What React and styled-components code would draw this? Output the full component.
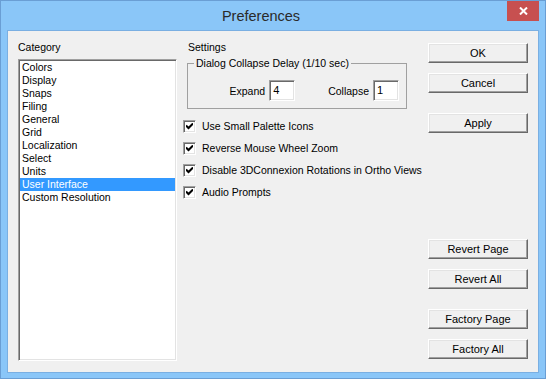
import React from "react";
import styled, { createGlobalStyle } from "styled-components";

const Global = createGlobalStyle`
  html, body { margin: 0; padding: 0; background: #8ac6f8; }
  body { font-family: "Liberation Sans", Arial, sans-serif; }
  * { box-sizing: border-box; }
`;

const Window = styled.div`
  width: 546px;
  height: 379px;
  background: #8ac6f8;
  border: 1px solid #6a9ed4;
  padding: 0 6px 5px 6px;
  display: flex;
  flex-direction: column;
`;

const TitleBar = styled.div`
  height: 29px;
  display: grid;
  grid-template-columns: 1fr auto 1fr;
  align-items: start;
`;

const Title = styled.div`
  grid-column: 2;
  margin-right: 24px;
  font-family: "Liberation Sans", Arial, sans-serif;
  font-size: 14.5px;
  color: #2a2a2a;
  padding-top: 6px;
  line-height: 18px;
`;

const Close = styled.div`
  grid-column: 3;
  justify-self: end;
  width: 32px;
  height: 20px;
  background: #c75050;
  display: flex;
  align-items: center;
  justify-content: center;
`;

const Client = styled.div`
  flex: 1;
  background: #f0f0f0;
  border: 1px solid #7aafe2;
  display: flex;
  padding: 10px 10px 11px 10px;
  font-family: "Liberation Sans", Arial, sans-serif;
  font-size: 10.5px;
  color: #000;
`;

const LeftCol = styled.div`
  width: 159px;
  display: flex;
  flex-direction: column;
`;

const Label = styled.div`
  line-height: 13px;
  height: 13px;
  margin-bottom: ${(p) => p.$mb || 0}px;
  margin-left: ${(p) => p.$ml || 0}px;
`;

const ListBox = styled.div`
  flex: 1;
  background: #fff;
  border: 1px solid;
  border-color: #a0a0a0 #fff #fff #a0a0a0;
  box-shadow: inset 1px 1px 0 #696969, inset -1px -1px 0 #e3e3e3;
  padding: 1px;
  display: flex;
  flex-direction: column;
`;

const Item = styled.div`
  height: 13px;
  line-height: 13px;
  padding-left: 2px;
  background: ${(p) => (p.$sel ? "#3399ff" : "transparent")};
  color: ${(p) => (p.$sel ? "#fff" : "#000")};
  white-space: nowrap;
`;

const MidCol = styled.div`
  flex: 1;
  margin-left: 6px;
  display: flex;
  flex-direction: column;
`;

const Group = styled.fieldset`
  margin: 3px 0 0 4px;
  width: 220px;
  height: 52px;
  border: 1px solid #a0a0a0;
  padding: 0 7px 0 0;
  display: flex;
  justify-content: flex-end;
  align-items: flex-start;
  legend {
    margin-left: 6px;
    padding: 0 2px;
    line-height: 13px;
    font-size: 10.5px;
  }
`;

const FieldRow = styled.div`
  display: flex;
  align-items: center;
  margin-top: 10px;
`;

const FieldLabel = styled.span`
  margin-right: 4px;
  margin-left: ${(p) => p.$ml || 0}px;
`;

const TextInput = styled.div`
  width: 26px;
  height: 21px;
  background: #fff;
  border: 1px solid;
  border-color: #a0a0a0 #fff #fff #a0a0a0;
  box-shadow: inset 1px 1px 0 #696969, inset -1px -1px 0 #e3e3e3;
  padding: 3px 0 0 3px;
  line-height: 13px;
  font-size: 11px;
`;

const Checks = styled.div`
  margin-top: 11px;
  display: flex;
  flex-direction: column;
  gap: 9px;
`;

const CheckRow = styled.div`
  display: flex;
  align-items: center;
  height: 13px;
  line-height: 13px;
  white-space: nowrap;
`;

const Box = styled.div`
  width: 13px;
  height: 13px;
  background: #fff;
  border: 1px solid;
  border-color: #a0a0a0 #fff #fff #a0a0a0;
  box-shadow: inset 1px 1px 0 #696969, inset -1px -1px 0 #e3e3e3;
  margin-right: 6px;
  display: flex;
  align-items: center;
  justify-content: center;
  flex-shrink: 0;
`;

const RightCol = styled.div`
  width: 100px;
  margin: 2px 0 2px 0;
  display: flex;
  flex-direction: column;
  justify-content: space-between;
`;

const BtnGroup = styled.div`
  display: flex;
  flex-direction: column;
`;

const Button = styled.div`
  width: 100px;
  height: 20px;
  margin-top: ${(p) => p.$mt || 0}px;
  background: #f0f0f0;
  border: 1px solid;
  border-color: #fff #696969 #696969 #fff;
  box-shadow: inset -1px -1px 0 #a0a0a0, inset 1px 1px 0 #e3e3e3;
  display: flex;
  align-items: center;
  justify-content: center;
  line-height: 13px;
  font-size: 11px;
`;

const categories = [
  "Colors",
  "Display",
  "Snaps",
  "Filing",
  "General",
  "Grid",
  "Localization",
  "Select",
  "Units",
  "User Interface",
  "Custom Resolution",
];

const options = [
  "Use Small Palette Icons",
  "Reverse Mouse Wheel Zoom",
  "Disable 3DConnexion Rotations in Ortho Views",
  "Audio Prompts",
];

const Check = () => (
  <svg width="7" height="7" viewBox="0 0 7 7">
    <path d="M0 2.5 L2.5 5 L7 0.5" stroke="#000" strokeWidth="2" fill="none" />
  </svg>
);

export default function App() {
  return (
    <>
      <Global />
      <Window>
        <TitleBar>
          <Title>Preferences</Title>
          <Close>
            <svg width="9" height="8" viewBox="0 0 9 8">
              <path d="M1 0.5 L8 7.5 M8 0.5 L1 7.5" stroke="#fff" strokeWidth="2" />
            </svg>
          </Close>
        </TitleBar>
        <Client>
          <LeftCol>
            <Label $mb={5}>Category</Label>
            <ListBox>
              {categories.map((c) => (
                <Item key={c} $sel={c === "User Interface"}>
                  {c}
                </Item>
              ))}
            </ListBox>
          </LeftCol>
          <MidCol>
            <Label $ml={5}>Settings</Label>
            <Group>
              <legend>Dialog Collapse Delay (1/10 sec)</legend>
              <FieldRow>
                <FieldLabel>Expand</FieldLabel>
                <TextInput>4</TextInput>
                <FieldLabel $ml={33}>Collapse</FieldLabel>
                <TextInput>1</TextInput>
              </FieldRow>
            </Group>
            <Checks>
              {options.map((o) => (
                <CheckRow key={o}>
                  <Box>
                    <Check />
                  </Box>
                  {o}
                </CheckRow>
              ))}
            </Checks>
          </MidCol>
          <RightCol>
            <BtnGroup>
              <Button>OK</Button>
              <Button $mt={10}>Cancel</Button>
              <Button $mt={20}>Apply</Button>
            </BtnGroup>
            <BtnGroup>
              <Button>Revert Page</Button>
              <Button $mt={10}>Revert All</Button>
              <Button $mt={20}>Factory Page</Button>
              <Button $mt={10}>Factory All</Button>
            </BtnGroup>
          </RightCol>
        </Client>
      </Window>
    </>
  );
}
